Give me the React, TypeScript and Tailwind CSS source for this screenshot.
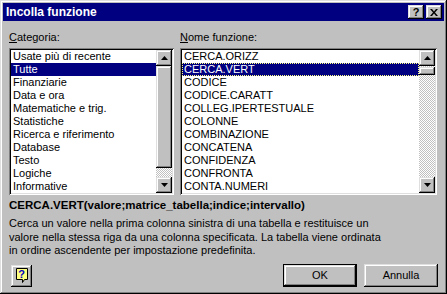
import React from "react";

const raised =
  "shadow-[inset_-1px_-1px_#000,inset_1px_1px_#dfdfdf,inset_-2px_-2px_#808080,inset_2px_2px_#fff]";
const sunken =
  "shadow-[inset_1px_1px_#808080,inset_-1px_-1px_#fff,inset_2px_2px_#000,inset_-2px_-2px_#dfdfdf]";
const dither =
  "bg-[image:repeating-conic-gradient(#fff_0_25%,#c0c0c0_0_50%)] bg-[length:2px_2px]";

const categorie = [
  "Usate più di recente",
  "Tutte",
  "Finanziarie",
  "Data e ora",
  "Matematiche e trig.",
  "Statistiche",
  "Ricerca e riferimento",
  "Database",
  "Testo",
  "Logiche",
  "Informative",
];

const funzioni = [
  "CERCA.ORIZZ",
  "CERCA.VERT",
  "CODICE",
  "CODICE.CARATT",
  "COLLEG.IPERTESTUALE",
  "COLONNE",
  "COMBINAZIONE",
  "CONCATENA",
  "CONFIDENZA",
  "CONFRONTA",
  "CONTA.NUMERI",
];

function Arrow({ up }: { up?: boolean }) {
  return (
    <div className={`w-[16px] h-[16px] bg-[#c0c0c0] flex items-center justify-center ${raised}`}>
      <svg width="7" height="4" viewBox="0 0 7 4">
        {up ? <polygon points="3.5,0 7,4 0,4" fill="#000" /> : <polygon points="0,0 7,0 3.5,4" fill="#000" />}
      </svg>
    </div>
  );
}

function ListBox({
  items,
  selected,
  focus,
  bar,
}: {
  items: string[];
  selected: number;
  focus?: boolean;
  bar: React.ReactNode;
}) {
  return (
    <div className={`h-[147px] bg-white p-[2px] flex ${sunken}`}>
      <div className="flex-1 flex flex-col">
        {items.map((it, i) => (
          <div
            key={it}
            className={`h-[13px] leading-[13px] px-[2px] whitespace-nowrap ${
              i === selected ? "bg-[#000080] text-white" : "text-black"
            } ${i === selected && focus ? "outline-1 outline-dotted outline-[#ffff80] -outline-offset-1" : ""}`}
          >
            {it}
          </div>
        ))}
      </div>
      <div className="w-[16px] flex flex-col">
        <Arrow up />
        {bar}
        <Arrow />
      </div>
    </div>
  );
}

export default function App() {
  return (
    <div
      className={`w-[447px] h-[294px] bg-[#c0c0c0] p-[3px] flex flex-col text-[11px] text-black ${raised}`}
      style={{ fontFamily: '"Liberation Sans", Arial, sans-serif' }}
    >
      <div className="h-[18px] bg-[#000080] flex items-center pl-[3px] pr-[2px]">
        <span className="text-white font-bold text-[12px] flex-1">Incolla funzione</span>
        <div className={`w-[16px] h-[14px] bg-[#c0c0c0] flex items-center justify-center font-bold text-[11px] leading-none ${raised}`}>
          ?
        </div>
        <div className={`w-[16px] h-[14px] ml-[2px] bg-[#c0c0c0] flex items-center justify-center ${raised}`}>
          <svg width="8" height="7" viewBox="0 0 8 7">
            <path d="M0 0h2l2 2.5L6 0h2L5 3.5 8 7H6L4 4.5 2 7H0l3-3.5z" fill="#000" />
          </svg>
        </div>
      </div>

      <div className="flex-1 flex flex-col px-[6px] pb-[4px]">
        <div className="flex gap-[6px] mt-[10px]">
          <div className="w-[165px]">
            <div className="h-[13px] leading-[13px] mb-[4px]">
              <span className="underline">C</span>ategoria:
            </div>
            <ListBox
              items={categorie}
              selected={1}
              bar={
                <div className="flex-1 flex flex-col">
                  <div className={`h-[102px] bg-[#c0c0c0] ${raised}`} />
                  <div className={`flex-1 ${dither}`} />
                </div>
              }
            />
          </div>
          <div className="w-[257px]">
            <div className="h-[13px] leading-[13px] mb-[4px]">
              <span className="underline">N</span>ome funzione:
            </div>
            <ListBox
              items={funzioni}
              selected={1}
              focus
              bar={
                <div className="flex-1 flex flex-col">
                  <div className={`h-[1px] ${dither}`} />
                  <div className={`h-[8px] bg-[#c0c0c0] ${raised}`} />
                  <div className={`flex-1 ${dither}`} />
                </div>
              }
            />
          </div>
        </div>

        <div className="mt-[4px] h-[13px] leading-[13px] font-bold text-[11.5px]">
          CERCA.VERT(valore;matrice_tabella;indice;intervallo)
        </div>
        <div className="mt-[5px] leading-[13.5px]">
          Cerca un valore nella prima colonna sinistra di una tabella e restituisce un
          <br />
          valore nella stessa riga da una colonna specificata. La tabella viene ordinata
          <br />
          in ordine ascendente per impostazione predefinita.
        </div>

        <div className="mt-auto flex items-center">
          <div className={`w-[21px] h-[22px] ml-[2px] bg-[#c0c0c0] flex items-center justify-center ${raised}`}>
            <div className="relative w-[12px] h-[15px]">
              <svg width="12" height="15" viewBox="0 0 12 15" className="absolute inset-0">
                <path d="M0.5 0.5h11v11h-3l-2 3v-3h-6z" fill="#ffff80" stroke="#000" />
              </svg>
              <span className="absolute left-0 top-[0px] w-[12px] text-center font-bold text-[11px] leading-[12px] text-[#0000c0]">
                ?
              </span>
            </div>
          </div>
          <div className="flex-1" />
          <div className={`w-[74px] h-[23px] flex items-center justify-center border border-black bg-[#c0c0c0] ${raised}`}>
            OK
          </div>
          <div className={`w-[74px] h-[23px] ml-[7px] flex items-center justify-center bg-[#c0c0c0] ${raised}`}>
            Annulla
          </div>
        </div>
      </div>
    </div>
  );
}
